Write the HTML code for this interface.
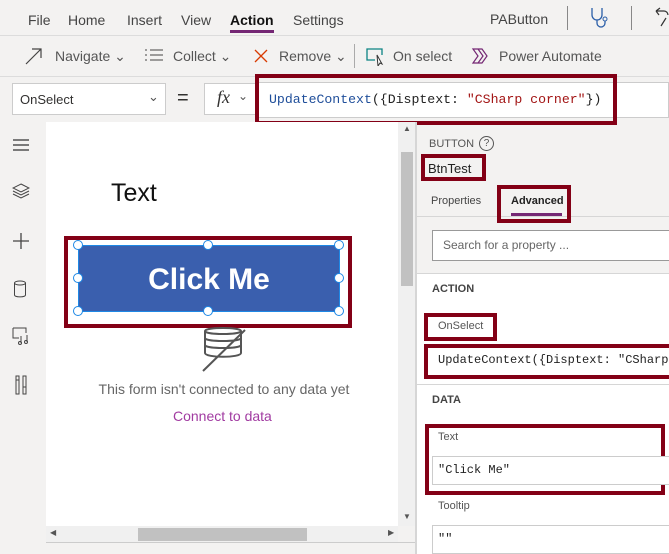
<!DOCTYPE html>
<html><head><style>
*{box-sizing:border-box;margin:0;padding:0}
body{width:669px;height:554px;overflow:hidden;background:#f3f2f1;font-family:"Segoe UI","Liberation Sans",sans-serif;position:relative;color:#323130}
.a{position:absolute}
.red{position:absolute;border:4px solid #830016}
.mono{font-family:"Liberation Mono",monospace}
.h{position:absolute;width:10px;height:10px;border:1.5px solid #1e88e5;background:#fff;border-radius:50%}
</style></head><body>
<!-- menu -->
<div class="a" style="left:0;top:0;width:669px;height:36px;background:#f3f2f1;border-bottom:1px solid #dcdcdc"></div>
<div class="a" style="top:12px;left:28px;font-size:14px;color:#444">File</div>
<div class="a" style="top:12px;left:68px;font-size:14px;color:#444">Home</div>
<div class="a" style="top:12px;left:127px;font-size:14px;color:#444">Insert</div>
<div class="a" style="top:12px;left:181px;font-size:14px;color:#444">View</div>
<div class="a" style="top:12px;left:230px;font-size:14px;font-weight:bold;color:#111">Action</div>
<div class="a" style="top:30px;left:181px;width:33px;height:3px;background:#742774;left:181px;display:none"></div>
<div class="a" style="top:30px;left:230px;width:44px;height:3px;background:#742774"></div>
<div class="a" style="top:12px;left:293px;font-size:14px;color:#444">Settings</div>
<div class="a" style="top:11px;left:490px;font-size:14px;color:#444">PAButton</div>
<div class="a" style="top:6px;left:567px;width:1px;height:24px;background:#888"></div>
<div class="a" style="top:6px;left:631px;width:1px;height:24px;background:#888"></div>
<svg class="a" style="left:589px;top:6px" width="22" height="22"><path d="M3 2v7a5 5 0 0 0 10 0V2M8 14v3a4 4 0 0 0 8 0v-2" stroke="#2a5ea8" fill="none" stroke-width="1.3"/><circle cx="16" cy="13" r="2" stroke="#2a5ea8" fill="none"/></svg>
<svg class="a" style="left:652px;top:6px" width="17" height="22"><path d="M4 5h8a4 4 0 0 1 4 4M4 5l4-3M4 5l3 4M14 12l-5 8" stroke="#333" fill="none" stroke-width="1.2"/></svg>
<!-- toolbar -->
<div class="a" style="left:0;top:76px;width:669px;height:1px;background:#dcdcdc"></div>
<svg class="a" style="left:24px;top:46px" width="20" height="20"><path d="M2 18L17 3M8 3h9v9" stroke="#444" fill="none" stroke-width="1.2"/></svg>
<div class="a" style="top:48px;left:55px;font-size:14px;color:#555">Navigate ⌄</div>
<svg class="a" style="left:145px;top:49px" width="20" height="14"><path d="M0 1h2M0 6h2M0 11h2M5 1h13M5 6h13M5 11h13" stroke="#444" stroke-width="1.1"/></svg>
<div class="a" style="top:48px;left:173px;font-size:14px;color:#555">Collect ⌄</div>
<svg class="a" style="left:253px;top:48px" width="16" height="16"><path d="M2 2l12 12M14 2L2 14" stroke="#d83b01" stroke-width="1.3"/></svg>
<div class="a" style="top:48px;left:279px;font-size:14px;color:#555">Remove ⌄</div>
<div class="a" style="top:44px;left:354px;width:1px;height:24px;background:#aaa"></div>
<svg class="a" style="left:366px;top:48px" width="20" height="18"><path d="M9 12H1V1h15v6" stroke="#0b8484" fill="none" stroke-width="1.3"/><path d="M11 7l5 9-2-1-2 3z" stroke="#333" fill="#fff"/></svg>
<div class="a" style="top:48px;left:393px;font-size:14px;color:#555">On select</div>
<svg class="a" style="left:471px;top:48px" width="20" height="16"><path d="M2 1h9l5 7-5 7H2l5-7z M7 1l5 7-5 7" stroke="#742774" fill="none" stroke-width="1.2"/></svg>
<div class="a" style="top:48px;left:499px;font-size:14px;color:#555">Power Automate</div>
<!-- formula bar -->
<div class="a" style="left:12px;top:83px;width:154px;height:32px;background:#fff;border:1px solid #ccc"></div>
<div class="a" style="left:20px;top:92px;font-size:13px">OnSelect</div>
<div class="a" style="left:148px;top:89px;font-size:13px;color:#555">⌄</div>
<div class="a" style="left:177px;top:87px;font-size:20px">=</div>
<div class="a" style="left:204px;top:83px;width:52px;height:32px;background:#fff;border:1px solid #ccc"></div>
<div class="a" style="left:217px;top:87px;font-size:18px;font-style:italic;font-family:'Liberation Serif',serif">fx</div>
<div class="a" style="left:238px;top:89px;font-size:12px;color:#555">⌄</div>
<div class="a" style="left:256px;top:82px;width:413px;height:36px;background:#fff;border:1px solid #ccc"></div>
<div class="red" style="left:255px;top:74px;width:362px;height:51px"></div>
<div class="a mono" style="left:269px;top:92px;font-size:13.2px;color:#1f4e9a;white-space:pre">UpdateContext<span style="color:#222">({Disptext: </span><span style="color:#a31515">"CSharp corner"</span><span style="color:#222">})</span></div>
<!-- left sidebar icons -->
<svg class="a" style="left:12px;top:138px" width="18" height="14"><path d="M1 2h16M1 7h16M1 12h16" stroke="#333" stroke-width="1.2"/></svg>
<svg class="a" style="left:12px;top:183px" width="18" height="16"><path d="M9 1l8 4-8 4-8-4z M1 8l8 4 8-4 M1 11l8 4 8-4" stroke="#444" fill="none"/></svg>
<svg class="a" style="left:11px;top:231px" width="20" height="20"><path d="M10 2v16M2 10h16" stroke="#444" stroke-width="1.3"/></svg>
<svg class="a" style="left:13px;top:280px" width="14" height="18"><ellipse cx="7" cy="3" rx="5.5" ry="2" stroke="#444" fill="none"/><path d="M1.5 3v12c0 2.5 11 2.5 11 0V3" stroke="#444" fill="none"/></svg>
<svg class="a" style="left:12px;top:327px" width="18" height="18"><path d="M1 1h13v5M1 1v10h6M9 9v7M15 8v7" stroke="#444" fill="none"/><circle cx="8" cy="16" r="1.5" stroke="#444" fill="none"/><circle cx="14" cy="15" r="1.5" stroke="#444" fill="none"/></svg>
<svg class="a" style="left:14px;top:375px" width="14" height="20"><path d="M2 1v18h3V1zM9 1v18h3V1z M2 5h3M9 12h3" stroke="#444" fill="none"/></svg>
<!-- canvas -->
<div class="a" style="left:46px;top:122px;width:352px;height:404px;background:#fff"></div>
<div class="a" style="left:398px;top:122px;width:17px;height:404px;background:#f0f0f0"></div>
<div class="a" style="left:401px;top:152px;width:12px;height:134px;background:#c1c1c1"></div>
<div class="a" style="left:403px;top:124px;font-size:8px;color:#555">▲</div>
<div class="a" style="left:403px;top:512px;font-size:8px;color:#555">▼</div>
<div class="a" style="left:46px;top:526px;width:352px;height:16px;background:#f0f0f0"></div>
<div class="a" style="left:138px;top:528px;width:169px;height:13px;background:#c1c1c1"></div>
<div class="a" style="left:50px;top:528px;font-size:8px;color:#555">◀</div>
<div class="a" style="left:388px;top:528px;font-size:8px;color:#555">▶</div>
<div class="a" style="left:46px;top:542px;width:370px;height:1px;background:#ccc"></div>
<div class="a" style="left:111px;top:179px;font-size:25px;color:#111">Text</div>
<div class="red" style="left:64px;top:236px;width:288px;height:92px"></div>
<div class="a" style="left:78px;top:245px;width:262px;height:67px;background:#3a5fae;border:1px solid #1e88e5"></div>
<div class="a" style="left:78px;top:263px;width:262px;text-align:center;font-size:30px;font-weight:bold;color:#fff">Click Me</div>
<div class="h" style="left:73px;top:240px"></div><div class="h" style="left:203px;top:240px"></div><div class="h" style="left:334px;top:240px"></div>
<div class="h" style="left:73px;top:273px"></div><div class="h" style="left:334px;top:273px"></div>
<div class="h" style="left:73px;top:306px"></div><div class="h" style="left:203px;top:306px"></div><div class="h" style="left:334px;top:306px"></div>
<svg class="a" style="left:200px;top:327px" width="46" height="46"><path d="M5 4c0-4 36-4 36 0v22c0 5-36 5-36 0z M5 4c0 4 36 4 36 0 M5 11c0 4 36 4 36 0 M5 18c0 4 36 4 36 0" stroke="#555" fill="none" stroke-width="2"/><path d="M3 44L45 3" stroke="#555" stroke-width="2"/></svg>
<div class="a" style="left:48px;top:381px;width:352px;text-align:center;font-size:14px;color:#666">This form isn't connected to any data yet</div>
<div class="a" style="left:173px;top:408px;font-size:14px;color:#a13ba1">Connect to data</div>
<!-- right panel -->
<div class="a" style="left:415px;top:122px;width:2px;height:432px;background:#d6d6d6"></div>
<div class="a" style="left:417px;top:274px;width:252px;height:280px;background:#fff"></div>
<div class="a" style="left:417px;top:216px;width:252px;height:1px;background:#d6d6d6"></div>
<div class="a" style="left:417px;top:273px;width:252px;height:1px;background:#d6d6d6"></div>
<div class="a" style="left:417px;top:384px;width:252px;height:1px;background:#d6d6d6"></div>
<div class="a" style="left:429px;top:138px;font-size:11px;color:#555">BUTTON</div>
<div class="a" style="left:479px;top:136px;width:15px;height:15px;border:1px solid #555;border-radius:50%;font-size:10px;text-align:center;line-height:13px;color:#555">?</div>
<div class="red" style="left:421px;top:154px;width:65px;height:27px"></div>
<div class="a" style="left:428px;top:161px;font-size:13px;color:#222">BtnTest</div>
<div class="a" style="left:431px;top:195px;font-size:11px;color:#444">Properties</div>
<div class="red" style="left:497px;top:185px;width:74px;height:38px"></div>
<div class="a" style="left:511px;top:195px;font-size:11px;font-weight:bold;color:#222">Advanced</div>
<div class="a" style="left:511px;top:213px;width:51px;height:3px;background:#742774"></div>
<div class="a" style="left:432px;top:230px;width:240px;height:31px;background:#fff;border:1px solid #999"></div>
<div class="a" style="left:443px;top:238px;font-size:12px;color:#666">Search for a property ...</div>
<div class="a" style="left:432px;top:283px;font-size:11px;font-weight:bold;color:#444">ACTION</div>
<div class="red" style="left:424px;top:313px;width:73px;height:28px"></div>
<div class="a" style="left:438px;top:320px;font-size:11px;color:#555">OnSelect</div>
<div class="red" style="left:424px;top:344px;width:250px;height:35px"></div>
<div class="a mono" style="left:438px;top:353px;font-size:12px;color:#222;white-space:pre">UpdateContext({Disptext: "CSharp</div>
<div class="a" style="left:432px;top:394px;font-size:11px;font-weight:bold;color:#444">DATA</div>
<div class="red" style="left:425px;top:424px;width:240px;height:71px"></div>
<div class="a" style="left:438px;top:431px;font-size:11px;color:#555">Text</div>
<div class="a" style="left:432px;top:456px;width:240px;height:29px;border:1px solid #ccc;background:#fff"></div>
<div class="a mono" style="left:438px;top:463px;font-size:12px;color:#222">"Click Me"</div>
<div class="a" style="left:438px;top:500px;font-size:11px;color:#555">Tooltip</div>
<div class="a" style="left:432px;top:525px;width:240px;height:29px;border:1px solid #ccc;background:#fff"></div>
<div class="a mono" style="left:438px;top:532px;font-size:12px;color:#222">""</div>
</body></html>
